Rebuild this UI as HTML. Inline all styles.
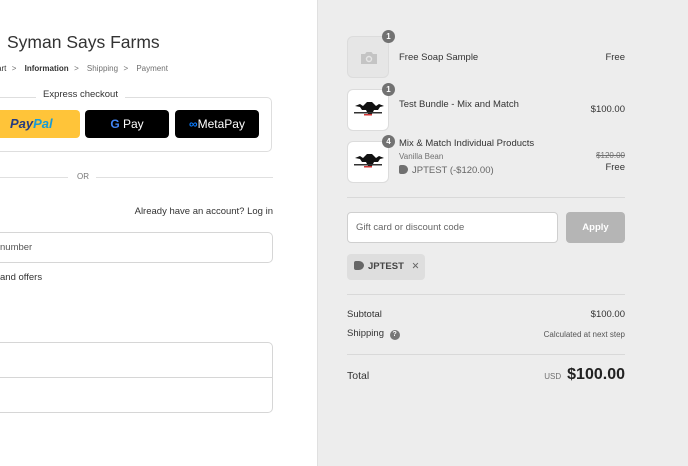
<!DOCTYPE html>
<html><head><style>
*{margin:0;padding:0;box-sizing:border-box}
body{width:688px;height:466px;overflow:hidden;font-family:"Liberation Sans",sans-serif;color:#333;background:#fff;position:relative}
.a{position:absolute;white-space:nowrap}
#r{position:absolute;left:317px;top:0;width:371px;height:466px;background:#ededed;border-left:1px solid #e0e0e0}
.th{position:absolute;left:347px;width:42px;height:42px;border:1px solid #dcdcdc;border-radius:6px;background:#fff}
.bd{position:absolute;width:13px;height:13px;border-radius:50%;background:#727272;color:#fff;font-size:8px;font-weight:bold;text-align:center;line-height:13px}
.hr{position:absolute;height:1px;background:#d9d9d9}
.logo{position:absolute;left:4px;top:10px;width:32px;height:16px}
</style></head><body>
<div class="a" style="left:7px;top:32px;font-size:17.5px;color:#333">Syman Says Farms</div>
<div class="a" style="left:-3px;top:64px;font-size:8px;color:#707070;word-spacing:0.5px"><span style="color:#333">art</span> &nbsp;&gt;&nbsp;&nbsp; <span style="color:#333;font-weight:bold">Information</span> &nbsp;&gt;&nbsp;&nbsp; Shipping &nbsp;&gt;&nbsp;&nbsp; Payment</div>
<div class="a" style="left:-5px;top:97px;width:277px;height:55px;border:1px solid #dedede;border-radius:5px"></div>
<div class="a" style="left:36px;top:89px;background:#fff;padding:0 7px;font-size:9.5px;color:#333">Express checkout</div>
<div class="a" style="left:-5px;top:110px;width:85px;height:28px;background:#ffc439;border-radius:4px;font-size:13px;font-weight:bold;font-style:italic;line-height:28px;padding-left:15px;color:#253b80">P<span style="color:#253b80">ay</span><span style="color:#179bd7">Pal</span></div>
<div class="a" style="left:85px;top:110px;width:84px;height:28px;background:#000;border-radius:4px;color:#fff;font-size:12px;line-height:28px;text-align:center"><b style="color:#4285f4">G</b> Pay</div>
<div class="a" style="left:175px;top:110px;width:84px;height:28px;background:#000;border-radius:4px;color:#fff;font-size:12px;line-height:28px;text-align:center"><span style="color:#0a7cff;font-weight:bold">∞</span>MetaPay</div>
<div class="hr" style="left:0;top:177px;width:68px;background:#e0e0e0"></div>
<div class="a" style="left:77px;top:172px;font-size:8px;color:#777">OR</div>
<div class="hr" style="left:96px;top:177px;width:177px;background:#e0e0e0"></div>
<div class="a" style="right:415px;top:206px;font-size:9.5px;color:#333">Already have an account? Log in</div>
<div class="a" style="left:-5px;top:232px;width:278px;height:31px;border:1px solid #d6d6d6;border-radius:5px;background:#fff"></div>
<div class="a" style="left:0;top:242px;font-size:9.5px;color:#555">number</div>
<div class="a" style="left:0;top:272px;font-size:9.5px;color:#333">and offers</div>
<div class="a" style="left:-5px;top:342px;width:278px;height:71px;border:1px solid #d6d6d6;border-radius:5px;background:#fff"></div>
<div class="hr" style="left:0;top:377px;width:272px;background:#d6d6d6"></div>

<div id="r"></div>
<div class="th" style="top:36px;background:#e6e6e6"><svg style="position:absolute;left:12px;top:14px" width="18" height="14" viewBox="0 0 18 14"><path d="M1 3h4l1.5-2h5L13 3h4v10H1z" fill="#c4c4c4"/><circle cx="9" cy="8" r="3.2" fill="#e6e6e6"/><circle cx="9" cy="8" r="1.8" fill="#c4c4c4"/></svg></div>
<div class="bd" style="left:382px;top:30px">1</div>
<div class="a" style="left:399px;top:52px;font-size:9.5px">Free Soap Sample</div>
<div class="a" style="right:63px;top:52px;font-size:9.5px">Free</div>
<div class="th" style="top:89px"><svg class="logo" viewBox="0 0 32 16"><path d="M3 6l5-2 3 2 4-4 5 0 4 4 3-2 5 2-4 1-2 3-4 0-2 4-4 0-2-4-4 0-2-3z" fill="#111"/><rect x="2" y="12" width="28" height="1.5" fill="#333"/><rect x="12" y="14" width="8" height="1.5" fill="#c33"/></svg></div>
<div class="bd" style="left:382px;top:83px">1</div>
<div class="a" style="left:399px;top:99px;font-size:9.5px">Test Bundle - Mix and Match</div>
<div class="a" style="right:63px;top:104px;font-size:9.5px">$100.00</div>
<div class="th" style="top:141px"><svg class="logo" viewBox="0 0 32 16"><path d="M3 6l5-2 3 2 4-4 5 0 4 4 3-2 5 2-4 1-2 3-4 0-2 4-4 0-2-4-4 0-2-3z" fill="#111"/><rect x="2" y="12" width="28" height="1.5" fill="#333"/><rect x="12" y="14" width="8" height="1.5" fill="#c33"/></svg></div>
<div class="bd" style="left:382px;top:135px">4</div>
<div class="a" style="left:399px;top:138px;font-size:9.5px">Mix &amp; Match Individual Products</div>
<div class="a" style="left:399px;top:152px;font-size:8px;color:#707070">Vanilla Bean</div>
<div class="a" style="left:399px;top:165px;font-size:9.5px;color:#666"><span style="display:inline-block;width:9px;height:9px;background:#707070;border-radius:2px 50% 50% 2px;vertical-align:-1px;margin-right:4px"></span>JPTEST (-$120.00)</div>
<div class="a" style="right:63px;top:151px;font-size:8px;color:#707070;text-decoration:line-through">$120.00</div>
<div class="a" style="right:63px;top:162px;font-size:9.5px">Free</div>
<div class="hr" style="left:347px;top:197px;width:278px"></div>
<div class="a" style="left:347px;top:212px;width:211px;height:31px;border:1px solid #cfcfcf;border-radius:4px;background:#fff;font-size:9.5px;color:#666;padding:9px 0 0 8px">Gift card or discount code</div>
<div class="a" style="left:566px;top:212px;width:59px;height:31px;background:#b5b5b5;border-radius:4px;color:#fff;font-size:9.5px;font-weight:bold;text-align:center;line-height:31px">Apply</div>
<div class="a" style="left:347px;top:254px;width:78px;height:26px;background:#dedede;border-radius:4px;font-size:9.5px;font-weight:bold;line-height:26px;padding-left:7px;color:#444"><span style="display:inline-block;width:10px;height:9px;background:#666;border-radius:2px 50% 50% 2px;vertical-align:-1px;margin-right:4px"></span>JPTEST <span style="font-weight:normal;margin-left:5px;color:#666">✕</span></div>
<div class="hr" style="left:347px;top:294px;width:278px"></div>
<div class="a" style="left:347px;top:309px;font-size:9.5px">Subtotal</div>
<div class="a" style="right:63px;top:309px;font-size:9.5px">$100.00</div>
<div class="a" style="left:347px;top:328px;font-size:9.5px">Shipping <span style="display:inline-block;width:10px;height:10px;border-radius:50%;background:#777;color:#fff;font-size:7px;text-align:center;line-height:10px;margin-left:3px;font-weight:bold">?</span></div>
<div class="a" style="right:63px;top:330px;font-size:8px;color:#555">Calculated at next step</div>
<div class="hr" style="left:347px;top:354px;width:278px"></div>
<div class="a" style="left:347px;top:370px;font-size:10.5px">Total</div>
<div class="a" style="right:63px;top:366px;font-size:16px;color:#222;font-weight:bold"><span style="font-size:8px;color:#707070;margin-right:6px;font-weight:normal">USD</span>$100.00</div>
</body></html>
